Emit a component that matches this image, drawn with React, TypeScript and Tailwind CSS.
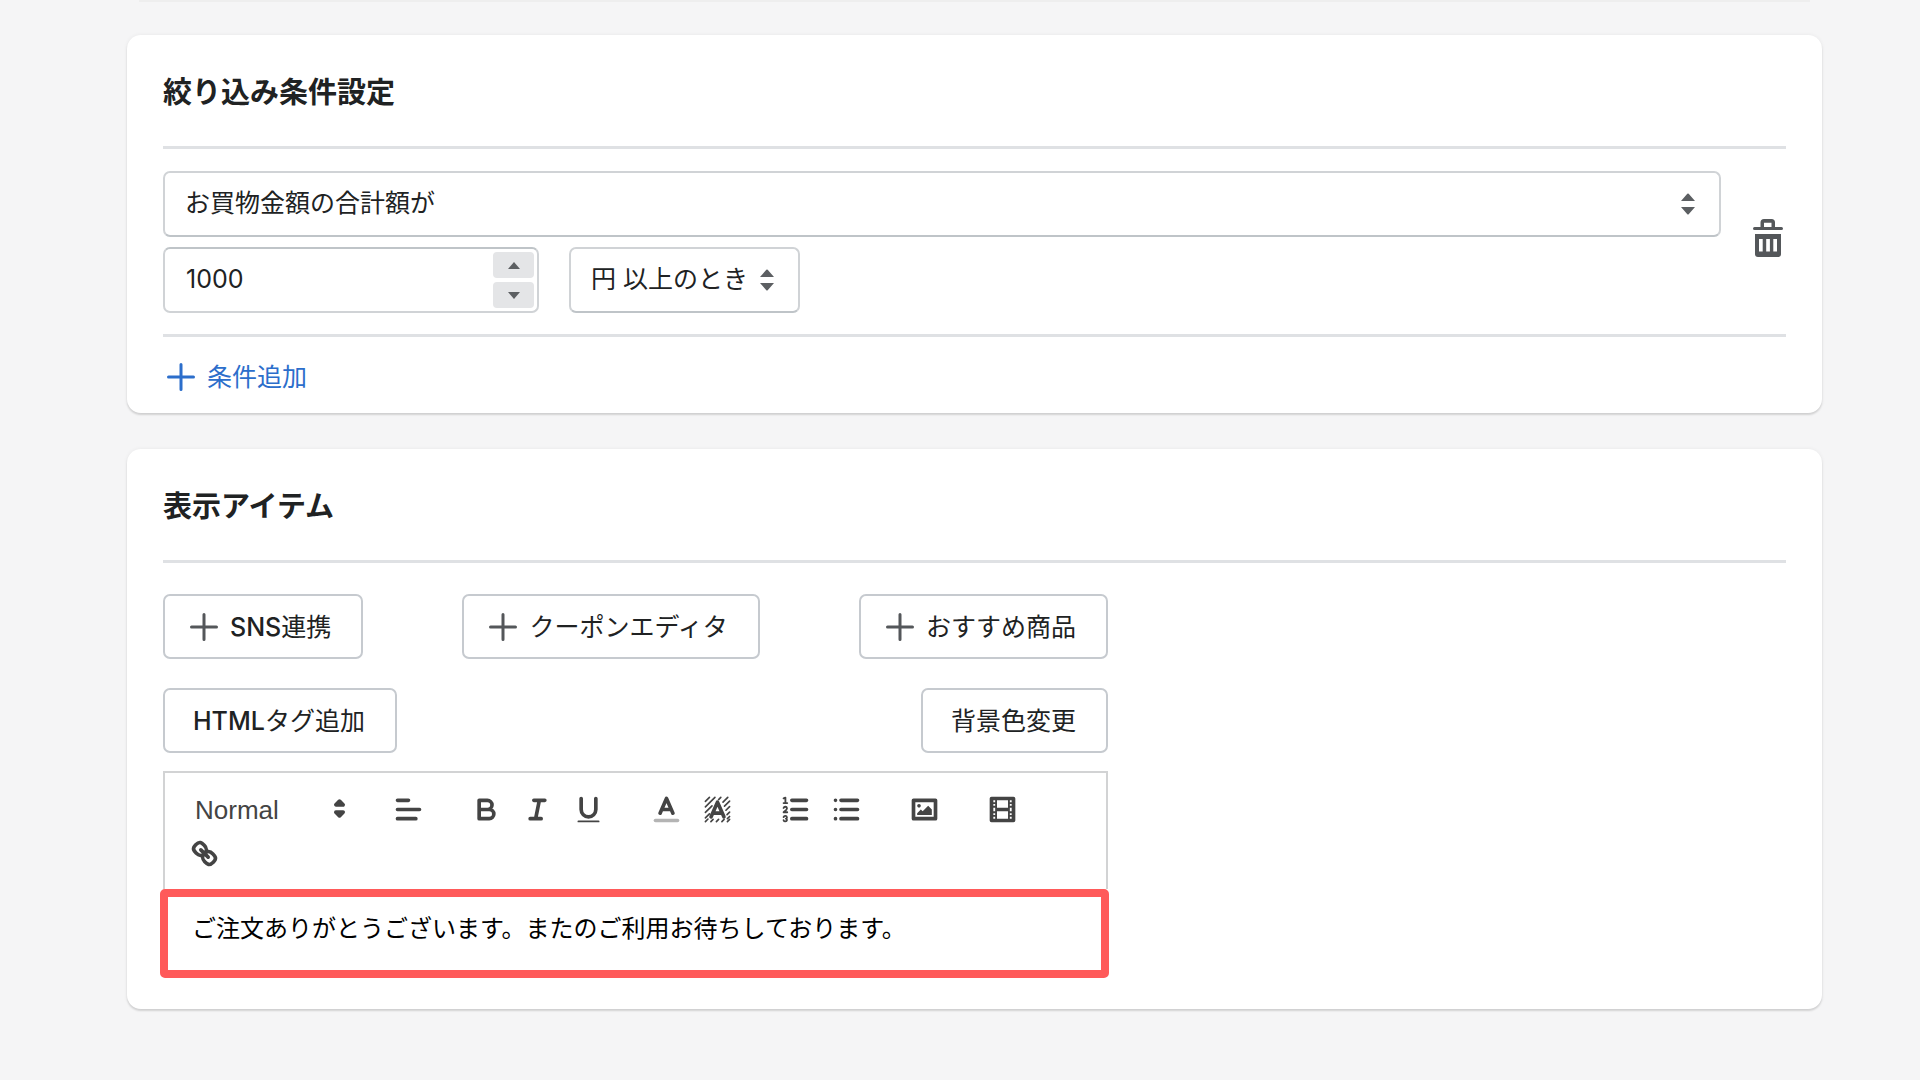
import React, { useState } from 'react';

interface ToolButtonProps {
  label: string;
  children: React.ReactNode;
}

const Card: React.FC<{ title: string; children: React.ReactNode }> = ({ title, children }) => (
  <section className="rounded-[14px] bg-white px-9 pt-9 shadow-[0_0_4px_rgba(23,24,24,0.06),0_2px_2px_rgba(0,0,0,0.13)]">
    <h2 className="text-[29px] leading-[44px] font-bold text-[#202223]">{title}</h2>
    <hr className="mt-[31px] border-t-3 border-[#dfe1e4]" />
    {children}
  </section>
);

const PlusIcon: React.FC = () => (
  <svg className="h-7 w-7 shrink-0" viewBox="0 0 28 28" fill="none" stroke="currentColor" strokeWidth="3" strokeLinecap="round">
    <path d="M14 1.5v25M1.5 14h25" />
  </svg>
);

const SelectArrows: React.FC = () => (
  <svg
    className="pointer-events-none absolute top-1/2 right-[26px] h-[22px] w-[14px] -translate-y-1/2 text-[#5c5f62]"
    viewBox="0 0 14 22"
    fill="currentColor"
  >
    <path d="M6.3.8a1 1 0 0 1 1.4 0L14 8H0zM6.3 21.2a1 1 0 0 0 1.4 0L14 14H0z" />
  </svg>
);

const OutlineButton: React.FC<{ icon?: boolean; latin?: string; children: React.ReactNode }> = ({
  icon,
  latin,
  children,
}) => (
  <button
    type="button"
    className={`flex h-[65px] items-center gap-3 rounded-[7px] border-2 border-[#c6cacf] bg-white pr-[30px] text-[25px] leading-9 text-[#202223] ${
      icon ? 'pl-[25px]' : 'pl-7'
    }`}
  >
    {icon && (
      <span className="text-[#54575a]">
        <PlusIcon />
      </span>
    )}
    <span>
      {latin && <span className="font-medium">{latin}</span>}
      {children}
    </span>
  </button>
);

const ToolButton: React.FC<ToolButtonProps> = ({ label, children }) => (
  <button type="button" aria-label={label} className="flex h-11 w-[51px] items-center justify-center">
    <svg
      className="h-[33px] w-[33px]"
      viewBox="0 0 18 18"
      fill="none"
      stroke="#444"
      strokeWidth="2"
      strokeLinecap="round"
      strokeLinejoin="round"
    >
      {children}
    </svg>
  </button>
);

const ToolGroup: React.FC<{ children: React.ReactNode }> = ({ children }) => <div className="flex">{children}</div>;

const EditorToolbar: React.FC = () => (
  <div className="flex flex-wrap gap-x-[27px] border-2 border-b-0 border-[#d2d3d4] px-[14px] py-[14px]">
    <div className="relative w-[177px]">
      <select
        aria-label="見出し"
        className="h-11 w-full appearance-none pt-0.5 pl-4 font-['Liberation_Sans',sans-serif] text-[26px] text-[#444]"
      >
        <option>Normal</option>
        <option>Heading 1</option>
        <option>Heading 2</option>
      </select>
      <svg
        className="pointer-events-none absolute top-[5px] right-0 h-[33px] w-[33px]"
        viewBox="0 0 18 18"
        fill="#444"
        stroke="#444"
        strokeWidth="2"
        strokeLinejoin="round"
      >
        <path d="M7 11l2 2 2-2zM7 7l2-2 2 2z" />
      </svg>
    </div>

    <ToolGroup>
      <ToolButton label="配置">
        <path d="M3 9h12M3 14h10M3 4h6" />
      </ToolButton>
    </ToolGroup>

    <ToolGroup>
      <ToolButton label="太字">
        <path d="M5 4h4.5a2.5 2.5 0 0 1 0 5H5zM5 9h5.5a2.5 2.5 0 0 1 0 5H5z" />
      </ToolButton>
      <ToolButton label="斜体">
        <path d="M7 4h6M5 14h6M8 14l2-10" />
      </ToolButton>
      <ToolButton label="下線">
        <path d="M5 3v6a4 4 0 0 0 8 0V3" />
        <rect x="3" y="15" width="12" height="1" rx="0.5" fill="#444" stroke="none" />
      </ToolButton>
    </ToolGroup>

    <ToolGroup>
      <ToolButton label="文字色">
        <path d="M3 15h12" opacity="0.4" />
        <path d="M5.5 11L9 3l3.5 8M11.63 9H6.38" />
      </ToolButton>
      <ToolButton label="文字の背景色">
        <path
          d="M2.4 4.6l2.2-2.2M2.4 7.6l5.2-5.2M2.4 10.6L6 7M2.4 13.6L4.6 11.4M2.4 15.6l1.4-1.4M5.4 15.6l1.2-1.2M8.4 15.6l1.2-1.2M11.4 15.6l1.2-1.2M14.4 15.6l1.2-1.2M12 5l2.6-2.6M9.6 3.6l1.2-1.2M12.8 7.2l2.8-2.8M13.6 9.4l2-2M14.2 11.8l1.4-1.4M14.4 14l1.2-1.2"
          strokeWidth="0.9"
        />
        <path d="M5.5 13L9 5l3.5 8M11.63 11H6.38" />
      </ToolButton>
    </ToolGroup>

    <ToolGroup>
      <ToolButton label="番号付きリスト">
        <path d="M7 4h8M7 9h8M7 14h8" />
        <path
          d="M2.5 5.5h2M2.5 2.9l1-.4v3M4.5 10.5h-2c0-.234 1.85-1.076 1.85-2.234a.959.959 0 0 0-1.85-.11M2.5 14.846a.959.959 0 0 0 1.85-.109A.7.7 0 0 0 3.75 14a.688.688 0 0 0 .6-.736.959.959 0 0 0-1.85-.109"
          strokeWidth="1"
        />
      </ToolButton>
      <ToolButton label="箇条書き">
        <path d="M6 4h9M6 9h9M6 14h9M3 4h0M3 9h0M3 14h0" />
      </ToolButton>
    </ToolGroup>

    <ToolGroup>
      <ToolButton label="画像">
        <rect x="3" y="4" width="12" height="10" />
        <circle cx="6" cy="7" r="1" fill="#444" stroke="none" />
        <path d="M5 12v-1l2-2 1 1 3-3 2 2v3z" fill="#444" stroke="none" />
      </ToolButton>
    </ToolGroup>

    <ToolGroup>
      <ToolButton label="動画">
        <rect x="3" y="3" width="12" height="12" />
        <path
          d="M5 3h1v12H5zM12 3h1v12h-1zM5 8h8v2H5zM3 5h3v1H3zM3 7h3v1H3zM3 10h3v1H3zM3 12h3v1H3zM12 5h3v1h-3zM12 7h3v1h-3zM12 10h3v1h-3zM12 12h3v1h-3z"
          fill="#444"
          stroke="none"
        />
      </ToolButton>
    </ToolGroup>

    <ToolGroup>
      <ToolButton label="リンク">
        <path d="M7 7l4 4" />
        <path d="M8.9 4.577a3.476 3.476 0 0 1 .36 4.679A3.476 3.476 0 0 1 4.577 8.9C3.185 7.5 2.035 6.4 4.217 4.217S7.5 3.185 8.9 4.577Z" />
        <path d="M13.423 9.1a3.476 3.476 0 0 0-4.679-.36 3.476 3.476 0 0 0 .36 4.679c1.392 1.392 2.5 2.542 4.679.36S14.815 10.5 13.423 9.1Z" />
      </ToolButton>
    </ToolGroup>
  </div>
);

export default function App() {
  const [amount, setAmount] = useState(1000);
  const [message, setMessage] = useState('ご注文ありがとうございます。またのご利用お待ちしております。');

  return (
    <main className="min-h-screen bg-[#f5f5f6] pr-[98px] pl-[127px] font-['Inter','Noto_Sans_CJK_JP',sans-serif]">
      {/* Bottom edge of the card above */}
      <div className="mx-3 h-0.5 bg-[#eeeeee]" />

      <div className="mt-[33px] flex flex-col gap-9">
        <Card title="絞り込み条件設定">
          <div className="mt-[22px] flex items-center justify-between">
            <div className="flex flex-grow flex-col gap-[10px]">
              <div className="relative">
                <select
                  aria-label="条件"
                  className="h-[66px] w-full appearance-none rounded-[7px] border-2 border-[#d0d3d6] border-b-[#bfc4c8] bg-white pl-5 text-[25px] text-[#202223]"
                >
                  <option>お買物金額の合計額が</option>
                </select>
                <SelectArrows />
              </div>

              <div className="flex gap-[30px]">
                <div className="flex h-[66px] w-[376px] rounded-[7px] border-2 border-[#d0d3d6] border-t-[#bfc4c8] p-[3px]">
                  <input
                    type="number"
                    aria-label="金額"
                    value={amount}
                    onChange={(e) => setAmount(Number(e.target.value))}
                    className="min-w-0 flex-grow [appearance:textfield] pl-[18px] text-[25px] text-[#202223] outline-none"
                  />
                  <div className="flex w-[41px] shrink-0 flex-col gap-1 text-[#5c5f62]">
                    <button
                      type="button"
                      aria-label="増やす"
                      onClick={() => setAmount(amount + 1)}
                      className="flex flex-1 items-center justify-center rounded-[4px] bg-[#e4e5e7]"
                    >
                      <svg className="h-[7px] w-3" viewBox="0 0 12 7" fill="currentColor">
                        <path d="M6 0l6 7H0z" />
                      </svg>
                    </button>
                    <button
                      type="button"
                      aria-label="減らす"
                      onClick={() => setAmount(amount - 1)}
                      className="flex flex-1 items-center justify-center rounded-[4px] bg-[#e4e5e7]"
                    >
                      <svg className="h-[7px] w-3" viewBox="0 0 12 7" fill="currentColor">
                        <path d="M6 7l6-7H0z" />
                      </svg>
                    </button>
                  </div>
                </div>

                <div className="relative">
                  <select
                    aria-label="比較"
                    className="h-[66px] w-[231px] appearance-none rounded-[7px] border-2 border-[#d0d3d6] border-b-[#bfc4c8] bg-white pl-5 text-[25px] text-[#202223]"
                  >
                    <option>円 以上のとき</option>
                  </select>
                  <SelectArrows />
                </div>
              </div>
            </div>

            <button type="button" aria-label="削除" className="ml-8 pr-[3px] pb-2 text-[#54575a]">
              <svg className="h-[38px] w-[30px]" viewBox="0 0 30 38" fill="currentColor" fillRule="evenodd">
                <path d="M7.5 8V3.5A3.5 3.5 0 0 1 11 0h7.500A3.500 3.500 0 0 1 22 3.500V8h6.500a1.500 1.500 0 0 1 0 3h-27a1.500 1.500 0 0 1 0-3zM11 8h7.500V3.700H11z" />
                <path d="M2 15h26v20a3 3 0 0 1-3 3H5a3 3 0 0 1-3-3zM6 20v12.500h3.700V20zM13.200 20v12.500h3.700V20zM20.300 20v12.500H24V20z" />
              </svg>
            </button>
          </div>

          <hr className="mt-[21px] border-t-3 border-[#dfe1e4]" />
          <button type="button" className="mt-[22px] mb-[18px] ml-1 flex items-center gap-3 text-[#2c6ecb]">
            <PlusIcon />
            <span className="text-[25px] leading-9">条件追加</span>
          </button>
        </Card>

        <Card title="表示アイテム">
          <div className="w-[945px] max-w-full pb-[31px]">
            <div className="mt-[31px] flex justify-between">
              <OutlineButton icon latin="SNS">
                連携
              </OutlineButton>
              <OutlineButton icon>クーポンエディタ</OutlineButton>
              <OutlineButton icon>おすすめ商品</OutlineButton>
            </div>
            <div className="mt-[29px] mb-[18px] flex justify-between">
              <OutlineButton latin="HTML">タグ追加</OutlineButton>
              <OutlineButton>背景色変更</OutlineButton>
            </div>

            <EditorToolbar />
            <div className="-mr-px -ml-[3px] rounded-[5px] border-8 border-[#ff5a5a] bg-white">
              <textarea
                aria-label="メッセージ"
                rows={1}
                value={message}
                onChange={(e) => setMessage(e.target.value)}
                className="block h-[73px] w-full resize-none overflow-hidden px-6 pt-[14px] text-[24px] leading-9 text-black outline-none"
              />
            </div>
          </div>
        </Card>
      </div>
    </main>
  );
}
